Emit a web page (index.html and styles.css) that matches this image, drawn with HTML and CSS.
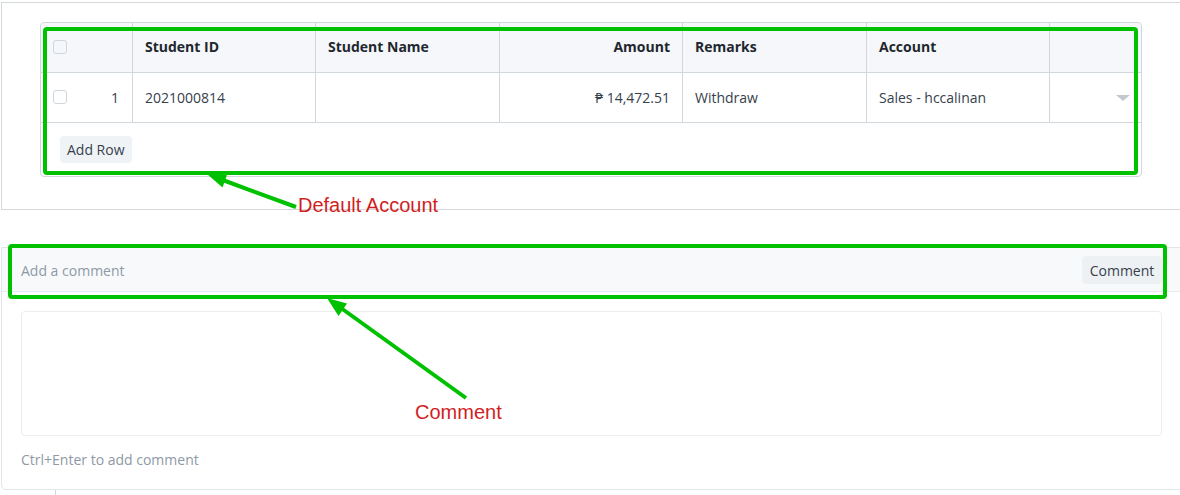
FILE: index.html
```html
<!DOCTYPE html>
<html>
<head>
<meta charset="utf-8">
<link rel="stylesheet" href="styles.css">
</head>
<body>
<div class="page">
  <section class="card form-card">
    <div class="grid-table">
      <div class="grid-row head">
        <div class="cell c-check"><span class="checkbox"></span></div>
        <div class="cell">Student ID</div>
        <div class="cell">Student Name</div>
        <div class="cell right">Amount</div>
        <div class="cell">Remarks</div>
        <div class="cell">Account</div>
        <div class="cell last"></div>
      </div>
      <div class="grid-row data">
        <div class="cell c-check"><span class="checkbox"></span><span class="idx">1</span></div>
        <div class="cell">2021000814</div>
        <div class="cell"></div>
        <div class="cell right">₱ 14,472.51</div>
        <div class="cell">Withdraw</div>
        <div class="cell">Sales - hccalinan</div>
        <div class="cell last c-caret"><span class="caret"></span></div>
      </div>
      <div class="grid-footer"><button class="btn">Add Row</button></div>
    </div>
  </section>

  <section class="card comment-card">
    <div class="comment-head">
      <span class="placeholder">Add a comment</span>
      <button class="btn btn-comment">Comment</button>
    </div>
    <div class="comment-body">
      <div class="textarea"></div>
      <div class="hint">Ctrl+Enter to add comment</div>
    </div>
  </section>
  <div class="timeline-line"></div>

  <svg class="annot" width="1180" height="495" viewBox="0 0 1180 495">
    <rect x="45" y="27" width="1091" height="144" rx="2" fill="none" stroke="#00c100" stroke-width="4"/>
    <rect x="10" y="244" width="1155" height="51" rx="2" fill="none" stroke="#00c100" stroke-width="4"/>
    <line x1="296" y1="205" x2="220" y2="177" stroke="#00c100" stroke-width="4"/>
    <polygon points="207,172 227.5,171.5 222.5,185.5" fill="#00c100"/>
    <line x1="466" y1="396" x2="341" y2="306" stroke="#00c100" stroke-width="4"/>
    <polygon points="327,296 347,301.5 338.5,314" fill="#00c100"/>
  </svg>
  <span class="label label-account">Default Account</span>
  <span class="label label-comment">Comment</span>
</div>
</body>
</html>
```
FILE: styles.css
```css
html, body {
  margin: 0;
  padding: 0;
  background: #ffffff;
  overflow: hidden;
}
.page {
  position: relative;
  width: 1180px;
  height: 495px;
  font-family: "Open Sans", "Noto Sans", sans-serif;
  font-size: 14px;
  color: #36414c;
}
.card {
  box-sizing: border-box;
  width: 1181px;
  margin-left: 1px;
}
.form-card {
  margin-top: 2px;
  border: 1px solid #d4d9de;
  padding: 19px 0 32px 38px;
}
.grid-table {
  box-sizing: border-box;
  width: 1102px;
  border: 1px solid #d1d8dd;
  border-radius: 4px;
}
.grid-row {
  display: grid;
  grid-template-columns: 92px 183px 184px 183px 184px 183px 91px;
  height: 50px;
  box-sizing: border-box;
  border-bottom: 1px solid #d1d8dd;
}
.grid-row.head {
  background: #f5f7fa;
  font-weight: 700;
  color: #1f272e;
  border-radius: 4px 4px 0 0;
}
.grid-row.head .cell {
  padding-bottom: 2px;
}
.grid-row.data .cell {
  padding-bottom: 1px;
}
.cell {
  box-sizing: border-box;
  border-right: 1px solid #d1d8dd;
  display: flex;
  align-items: center;
  padding: 0 12px;
  white-space: nowrap;
}
.cell.right {
  justify-content: flex-end;
  padding-right: 12px;
}
.cell.last {
  border-right: none;
}
.c-check {
  padding: 0 13px 0 12px;
  justify-content: space-between;
}
.checkbox {
  box-sizing: border-box;
  width: 14px;
  height: 14px;
  border: 1px solid #cfd6dc;
  border-radius: 3px;
  background: transparent;
}
.data .checkbox {
  background: #fff;
}
.idx {
  color: #36414c;
}
.c-caret {
  justify-content: flex-end;
  padding-right: 11px;
}
.caret {
  width: 0;
  height: 0;
  border-left: 7px solid transparent;
  border-right: 7px solid transparent;
  border-top: 6px solid #c3c8cd;
  margin-top: 2px;
}
.grid-footer {
  padding: 13px 19px;
  display: flex;
}
.btn {
  font-family: inherit;
  font-size: 14px;
  color: #36414c;
  background: #f0f3f6;
  border: none;
  border-radius: 4px;
  height: 27px;
  padding: 0 7px;
  line-height: 27px;
}
.comment-card {
  margin-top: 37px;
  border: 1px solid #e2e6e9;
  border-radius: 0 0 0 5px;
}
.comment-head {
  height: 44px;
  box-sizing: border-box;
  background: #f8f9fb;
  border-bottom: 1px solid #e8ebee;
  display: flex;
  align-items: center;
  justify-content: space-between;
  padding: 1px 19px 0 19px;
}
.placeholder {
  color: #8d99a6;
}
.btn-comment {
  height: 28px;
  width: 80px;
  padding: 0;
  background: #eef1f4;
}
.comment-body {
  padding: 19px 19px 19px 19px;
}
.textarea {
  box-sizing: border-box;
  height: 125px;
  border: 1px solid #ebeef0;
  border-radius: 4px;
}
.hint {
  margin-top: 14px;
  line-height: 20px;
  color: #8d99a6;
}
.timeline-line {
  margin-left: 55px;
  width: 1px;
  height: 10px;
  background: #d1d8dd;
}
.annot {
  position: absolute;
  left: 0;
  top: 0;
  pointer-events: none;
}
.label {
  position: absolute;
  font-family: "Liberation Sans", Arial, sans-serif;
  font-size: 20px;
  line-height: 20px;
  color: #d01f1f;
  white-space: nowrap;
}
.label-account {
  left: 298px;
  top: 193px;
}
.label-comment {
  left: 415px;
  top: 400px;
}
```
